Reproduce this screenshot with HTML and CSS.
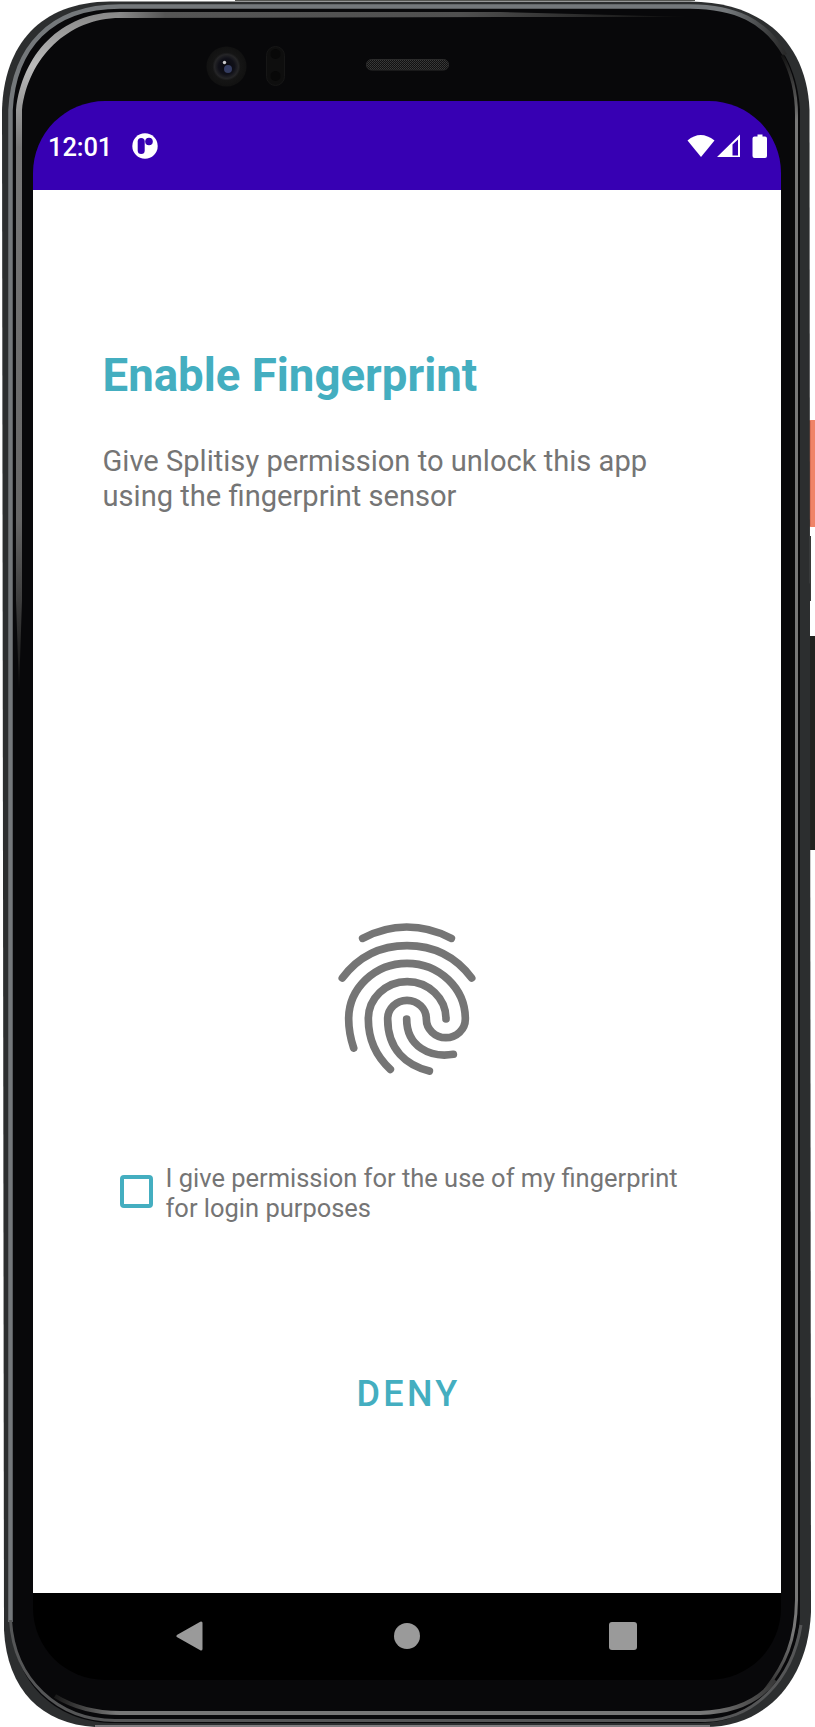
FILE: index.html
```
<!DOCTYPE html>
<html lang="en">
<head>
<meta charset="utf-8">
<title>Enable Fingerprint</title>
<link rel="stylesheet" href="styles.css">
</head>
<body>
<div class="phone">
  <svg class="shell" viewBox="0 0 815 1727" aria-hidden="true">
    <defs>
      <linearGradient id="rimLeft" x1="0" y1="0" x2="0" y2="1"><stop offset="0" stop-color="#888"/><stop offset=".08" stop-color="#bbb"/><stop offset=".2" stop-color="#777"/><stop offset=".75" stop-color="#666"/><stop offset="1" stop-color="#111"/></linearGradient>
      <linearGradient id="rimTop"><stop offset="0" stop-color="#888"/><stop offset=".08" stop-color="#555"/><stop offset=".6" stop-color="#505050"/><stop offset="1" stop-color="#0a0a0a"/></linearGradient>
      <linearGradient id="edgeTop" gradientUnits="userSpaceOnUse" x1="0" y1="0" x2="790" y2="0"><stop offset="0" stop-color="#74787b"/><stop offset=".92" stop-color="#74787b"/><stop offset="1" stop-color="#222"/></linearGradient>
      <linearGradient id="edgeRight" gradientUnits="userSpaceOnUse" x1="0" y1="55" x2="0" y2="1700"><stop offset="0" stop-color="#111"/><stop offset=".04" stop-color="#777"/><stop offset=".96" stop-color="#777"/><stop offset="1" stop-color="#222"/></linearGradient>
      <linearGradient id="edgeBottom" gradientUnits="userSpaceOnUse" x1="50" y1="0" x2="780" y2="0"><stop offset="0" stop-color="#111"/><stop offset=".09" stop-color="#777"/><stop offset=".9" stop-color="#777"/><stop offset="1" stop-color="#333"/></linearGradient>
      <radialGradient id="lens"><stop offset="0" stop-color="#08080f"/><stop offset=".4" stop-color="#101018"/><stop offset=".6" stop-color="#252527"/><stop offset=".7" stop-color="#151515"/><stop offset="1" stop-color="#111"/></radialGradient>
      <pattern id="mesh" width="2" height="2" patternUnits="userSpaceOnUse"><rect width="2" height="2" fill="#111"/><rect width="1" height="1" fill="#3b3b3b"/><rect x="1" y="1" width="1" height="1" fill="#333"/></pattern>
    </defs>
    <!-- side buttons -->
    <rect x="808" y="420" width="12" height="107" rx="2" fill="#f08468"/>
    <path d="M810 421v105" stroke="#c5604a"/>
    <path d="M810.500 536v65" stroke="#3a3a38"/>
    <rect x="808" y="636" width="12" height="214" rx="2" fill="#22221f"/>
    <path d="M235 .5h460" stroke="#555652"/>
    <!-- body -->
    <path d="M2 110C4 45 40 2 110 1.500H690C765 2 807 45 809.500 110L811 1612C808 1682 765 1727 705 1727H95C42 1724 7 1690 4 1630Z" fill="#2c2e2f"/>
    <path d="M10 110C14 46 50 6 120 6H690C755 6 796 45 800 110V1617C796 1675 757 1723 700 1723H110C55 1721 13 1683 11 1620Z" fill="#08080a"/>
    <path d="M10.500 1622V110C14 48 50 6.500 120 6.500H690C735 7 765 20 785 55" fill="none" stroke="url(#edgeTop)" stroke-width="4.500"/>
    <path d="M10.500 1620C14 1680 58 1720 115 1720.500H705C755 1719 792 1680 801 1625" fill="none" stroke="#555657" stroke-width="3"/>
    <path d="M95 1726H710" stroke="#807d80" stroke-width="2"/>
    <path d="M16 600V110C22 55 60 12 120 12V18C68 18 28 58 22 110V600L19 690Z" fill="url(#rimLeft)"/>
    <path d="M119.500 12H500L690 17H500L119.500 18Z" fill="url(#rimTop)"/>
    <path d="M782 55C793 75 796.500 95 796.500 115V1600C796 1640 785 1665 765 1690" fill="none" stroke="url(#edgeRight)" stroke-width="3"/>
    <path d="M55 1696C78 1710 100 1713 120 1713H700C735 1712 760 1700 775 1680" fill="none" stroke="url(#edgeBottom)" stroke-width="4"/>
    <!-- front sensors and earpiece -->
    <circle cx="226.500" cy="66.500" r="20" fill="url(#lens)"/>
    <circle cx="228" cy="69" r="4" fill="#343c60"/>
    <circle cx="224.500" cy="62.500" r="1.700" fill="#ccc"/>
    <rect x="266.500" y="46.500" width="18" height="39" rx="9" fill="#0e0e0e" stroke="#161616"/>
    <circle cx="275.500" cy="54" r="5" fill="#080808"/>
    <circle cx="275.500" cy="76" r="5" fill="#080808"/>
    <rect x="366.500" y="59.500" width="82" height="10.500" rx="5" fill="url(#mesh)" stroke="#2b2b2b"/>
  </svg>

  <div class="screen">
    <header class="status">
      <span class="clock">12:01</span>
      <svg class="app-badge" viewBox="0 0 26 26"><circle cx="13" cy="13" r="12.700" fill="#fff"/><rect x="5.700" y="5" width="7" height="16" rx="3.500" fill="#3700b3"/><circle cx="17" cy="8.500" r="3.800" fill="#3700b3"/></svg>
      <svg class="signals" viewBox="0 0 81 25"><path d="M.5 6.500Q13.500-4.500 27.500 6.500L14 23Z" fill="#fff"/><path fill-rule="evenodd" d="M30 23L53 .5V23ZM45.500 10.500V21.500H51V5.500Z" fill="#fff"/><path d="M70.500.5h5v2h2.500q2 0 2 2v17.500q0 2-2 2h-10.500q-2 0-2-2v-17.500q0-2 2-2h3Z" fill="#fff"/></svg>
    </header>

    <main class="content">
      <h1 class="title">Enable Fingerprint</h1>
      <p class="lead">Give Splitisy permission to unlock this app<br>using the fingerprint sensor</p>
      <svg class="fingerprint" viewBox="0 0 510 525" role="img" aria-label="Fingerprint">
        <path d="M128 85Q192 51 260 51Q330 51 394 85"/>
        <path d="M67 204Q140 107 261 107Q382 107 455 204"/>
        <path d="M101 414C88 375 86 345 86 327A175 167 0 0 1 436 327A58.500 56 0 0 1 319 327A58 56 0 0 0 203 327C203 420 260 466 328 483"/>
        <path d="M378 327A116.500 112 0 0 0 145 327C145 395 170 440 211 478"/>
        <path d="M260 327C260 410 330 444 400 433"/>
      </svg>
      <label class="consent"><span class="checkbox"></span><span class="consent-text">I give permission for the use of my fingerprint<br>for login purposes</span></label>
      <button class="deny">DENY</button>
    </main>

    <nav class="nav">
      <svg class="back" viewBox="0 0 28 30"><path d="M2 15L25 2V28Z"/></svg>
      <span class="home"></span>
      <span class="recents"></span>
    </nav>
  </div>
</div>
</body>
</html>
```

FILE: styles.css
```
* { box-sizing: border-box; }
body { margin: 0; background: #fff; font-family: Roboto, sans-serif; }
.phone { position: relative; width: 815px; height: 1727px; padding: 101px 34px 47px 33px; overflow: hidden; }
.shell { position: absolute; inset: 0; width: 815px; height: 1727px; }
.screen { position: relative; display: flex; flex-direction: column; width: 748px; height: 1579px; border-radius: 72px; overflow: hidden; }
.status { display: flex; align-items: center; height: 89px; flex: none; padding: 1px 13.5px 0 15px; background: #3700b3; color: #fff; }
.clock { width: 84px; padding-top: 1px; font-size: 25.5px; font-weight: 500; line-height: 30px; letter-spacing: -.1px; }
.app-badge { width: 26px; height: 26px; }
.signals { width: 81px; height: 25px; margin-left: auto; }
.content { display: flex; flex: 1; flex-direction: column; align-items: center; min-height: 0; background: #fff; }
.title { align-self: flex-start; margin: 159px 0 0 69.5px; color: #44aec0; font-size: 45.6px; font-weight: 700; line-height: 53px; white-space: nowrap; }
.lead { align-self: flex-start; margin: 42px 0 0 69.5px; color: #757575; font-size: 29.12px; line-height: 34.5px; white-space: nowrap; }
.fingerprint { flex: none; width: 170px; height: 175px; margin: 397px 4px 0 0; }
.fingerprint path { fill: none; stroke: #757575; stroke-width: 23; stroke-linecap: round; }
.consent { display: flex; align-self: flex-start; align-items: flex-start; gap: 12.5px; margin: 79px 0 0 87px; }
.checkbox { width: 33px; height: 33px; margin-top: 11px; border: 4px solid #44aec0; border-radius: 4px; }
.consent-text { color: #757575; font-size: 25.48px; line-height: 29.5px; white-space: nowrap; }
.deny { margin: 149px 0 0 3px; padding: 0; border: 0; background: none; color: #44aec0; font: 500 36px/44px Roboto, sans-serif; letter-spacing: 3.3px; }
.nav { display: flex; align-items: center; height: 86px; flex: none; margin-bottom: 0; padding: 0 144px 1px 143px; justify-content: space-between; background: #000; box-sizing: content-box; }
.back { width: 28px; height: 30px; }
.back path { fill: #9a9a9a; stroke: #9a9a9a; stroke-width: 3; stroke-linejoin: round; }
.home { width: 26px; height: 26px; border-radius: 50%; background: #9a9a9a; }
.recents { width: 28px; height: 28px; border-radius: 3px; background: #9a9a9a; }
```
